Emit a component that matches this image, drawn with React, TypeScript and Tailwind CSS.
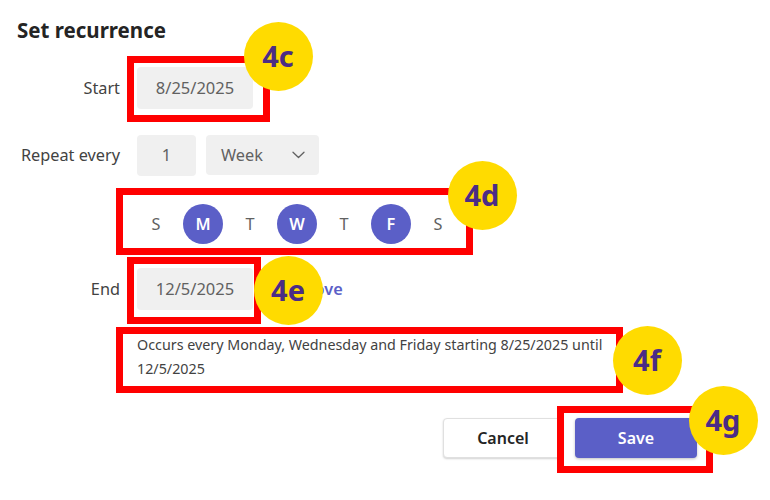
import React from "react";

const Frame = ({ l, t, w, h }: { l: number; t: number; w: number; h: number }) => (
  <div
    className="absolute border-[7px] border-[#ff0000] pointer-events-none"
    style={{ left: l, top: t, width: w, height: h }}
  />
);

const Badge = ({ cx, cy, label }: { cx: number; cy: number; label: string }) => (
  <div
    className="absolute w-[69px] h-[69px] rounded-full bg-[#ffdb00] flex items-center justify-center text-[29px] font-bold text-[#4b2c86] leading-none"
    style={{ left: cx - 34.5, top: cy - 34.5, fontFamily: '"Noto Sans", sans-serif' }}
  >
    <span className="-mt-[2px]">{label}</span>
  </div>
);

const days = [
  { d: "S", on: false },
  { d: "M", on: true },
  { d: "T", on: false },
  { d: "W", on: true },
  { d: "T", on: false },
  { d: "F", on: true },
  { d: "S", on: false },
];

export default function App() {
  return (
    <div
      className="relative w-[770px] h-[500px] bg-white overflow-hidden text-[#424242]"
      style={{ fontFamily: '"Noto Sans", "Open Sans", sans-serif' }}
    >
      <div className="pl-[17px] pt-[18px] text-[20.5px] leading-[24px] font-bold text-[#242424]">
        Set recurrence
      </div>

      <div className="grid grid-cols-[120px_1fr] gap-x-[17px] text-[16.3px]">
        {/* Start */}
        <div className="mt-[25px] flex items-center justify-end h-[42px]">Start</div>
        <div className="mt-[25px] flex">
          <div className="w-[116px] h-[42px] rounded-[4px] bg-[#f0f0f0] flex items-center justify-center text-[#616161] text-[16.5px]">
            8/25/2025
          </div>
        </div>

        {/* Repeat every */}
        <div className="mt-[26px] flex items-center justify-end h-[41px]">Repeat every</div>
        <div className="mt-[26px] flex gap-[10px]">
          <div className="w-[59px] h-[41px] rounded-[4px] bg-[#f0f0f0] flex items-center justify-center text-[#616161]">
            1
          </div>
          <div className="w-[113px] h-[40px] rounded-[4px] bg-[#f0f0f0] flex items-center pl-[15px] pr-[14px] text-[#616161]">
            <span className="flex-1">Week</span>
            <svg width="13" height="8" viewBox="0 0 13 8" fill="none">
              <path d="M1 1.2L6.5 6.5L12 1.2" stroke="#616161" strokeWidth="1.3" strokeLinecap="round" strokeLinejoin="round" />
            </svg>
          </div>
        </div>

        {/* Days */}
        <div className="mt-[28px] h-[40px]" />
        <div className="mt-[28px] -ml-[1px] flex gap-[7px]">
          {days.map((x, i) =>
            x.on ? (
              <div
                key={i}
                className="w-[40px] h-[40px] rounded-full bg-[#5b5fc7] text-white font-semibold flex items-center justify-center"
              >
                {x.d}
              </div>
            ) : (
              <div key={i} className="w-[40px] h-[40px] flex items-center justify-center text-[#616161]">
                {x.d}
              </div>
            )
          )}
        </div>

        {/* End */}
        <div className="mt-[24px] flex items-center justify-end h-[42px]">End</div>
        <div className="mt-[24px] flex items-center">
          <div className="w-[116px] h-[42px] rounded-[4px] bg-[#f0f0f0] flex items-center justify-center text-[#616161] text-[16.5px]">
            12/5/2025
          </div>
          <span className="ml-[26px] text-[#5b5fc7] font-semibold">Remove</span>
        </div>

        {/* Summary */}
        <div />
        <div className="mt-[23px] w-[475px] text-[14.3px] leading-[24px] text-[#424242]">
          Occurs every Monday, Wednesday and Friday starting 8/25/2025 until 12/5/2025
        </div>
      </div>

      <div className="mt-[37px] pr-[73px] flex justify-end gap-[12px] text-[16px] font-semibold">
        <button className="w-[120px] h-[40px] rounded-[4px] bg-white border border-[#e0e0e0] shadow-[0_1px_2px_rgba(0,0,0,0.18)] text-[#242424]">
          Cancel
        </button>
        <button className="w-[122px] h-[40px] rounded-[4px] bg-[#5b5fc7] shadow-[0_1px_3px_rgba(0,0,0,0.25)] text-white">
          Save
        </button>
      </div>

      {/* annotations */}
      <Frame l={127} t={56} w={143} h={66} />
      <Frame l={116} t={188} w={357} h={67} />
      <Frame l={127} t={257} w={134} h={67} />
      <Frame l={116} t={327} w={507} h={66} />
      <Frame l={557} t={406} w={156} h={67} />

      <Badge cx={278} cy={56} label="4c" />
      <Badge cx={482} cy={195} label="4d" />
      <Badge cx={288} cy={290} label="4e" />
      <Badge cx={647} cy={360} label="4f" />
      <Badge cx={723} cy={420} label="4g" />
    </div>
  );
}
